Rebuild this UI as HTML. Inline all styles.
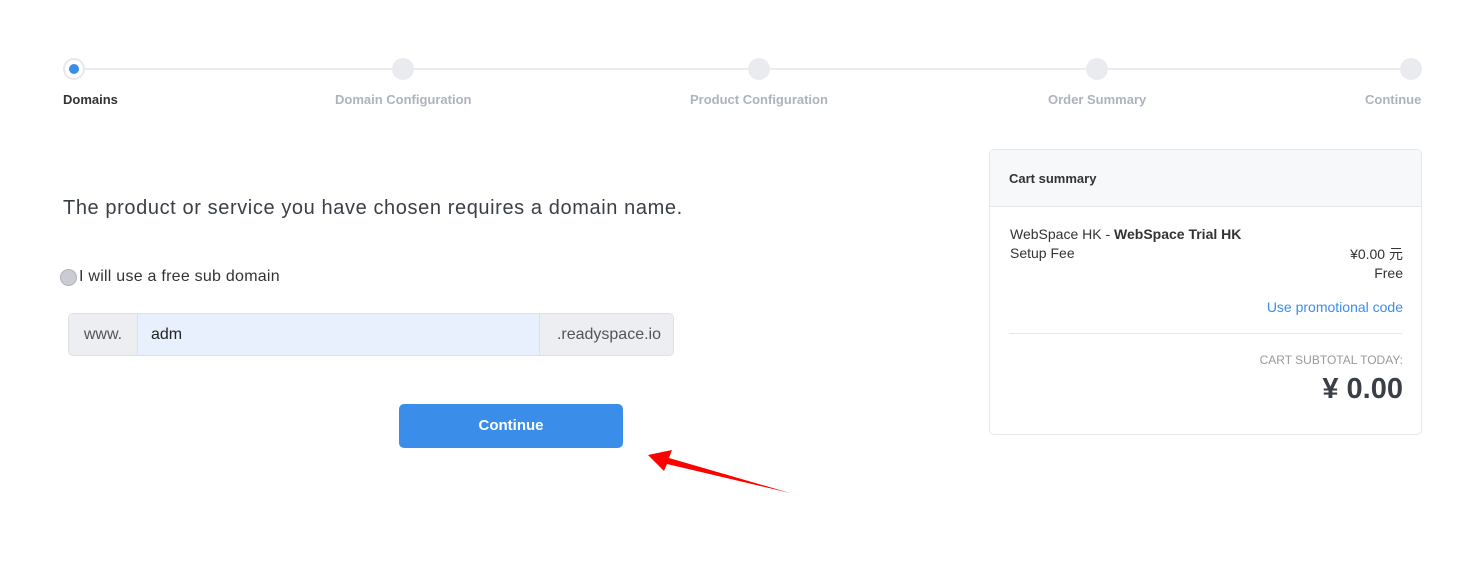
<!DOCTYPE html>
<html><head><meta charset="utf-8"><style>
body{margin:0;width:1464px;height:570px;background:#fff;font-family:"Liberation Sans","Noto Sans CJK SC",sans-serif;position:relative;overflow:hidden;color:#333}
.a{position:absolute}
.dot{position:absolute;width:22px;height:22px;border-radius:50%;background:#e9ebef;top:58px}
.lbl{position:absolute;top:92px;font-size:13px;font-weight:bold;color:#adb3bd;white-space:nowrap}
</style></head><body>
<div class="a" style="left:74px;top:68px;width:1336px;height:2px;background:#e9ebef"></div>
<div class="dot" style="left:63px;background:#fff;border:2px solid #e4e8ef;width:18px;height:18px"></div>
<div class="a" style="left:69px;top:64px;width:10px;height:10px;border-radius:50%;background:#3a8ee9"></div>
<div class="dot" style="left:392px"></div>
<div class="dot" style="left:748px"></div>
<div class="dot" style="left:1086px"></div>
<div class="dot" style="left:1400px"></div>
<div class="lbl" style="left:63px;color:#333">Domains</div>
<div class="lbl" style="left:335px">Domain Configuration</div>
<div class="lbl" style="left:690px">Product Configuration</div>
<div class="lbl" style="left:1048px">Order Summary</div>
<div class="lbl" style="left:1365px">Continue</div>

<div class="a" style="left:63px;top:197px;font-size:20px;letter-spacing:0.6px;color:#3a3f47">The product or service you have chosen requires a domain name.</div>
<div class="a" style="left:60px;top:269px;width:15px;height:15px;border-radius:50%;background:#c9cdd3;border:1px solid #aeb3ba"></div>
<div class="a" style="left:79px;top:268px;font-size:16px;letter-spacing:0.25px;color:#333">I will use a free sub domain</div>

<div class="a" style="left:68px;top:313px;width:604px;height:41px;border:1px solid #dde1e6;border-radius:5px;background:#eceef1;overflow:hidden">
<div class="a" style="left:0;top:0;width:68px;height:41px;line-height:41px;text-align:center;font-size:16px;color:#555">www.</div>
<div class="a" style="left:68px;top:0;width:403px;height:41px;background:#e8f0fd;border-left:1px solid #dde1e6;border-right:1px solid #dde1e6;line-height:41px;padding-left:13px;box-sizing:border-box;font-size:16px;color:#222">adm</div>
<div class="a" style="right:12px;top:0;height:41px;line-height:41px;font-size:16px;color:#555">.readyspace.io</div>
</div>

<div class="a" style="left:399px;top:404px;width:224px;height:44px;border-radius:5px;background:#3a8ee9;color:#fff;font-size:15px;font-weight:bold;text-align:center;line-height:44px">Continue</div>

<svg class="a" style="left:0;top:0" width="1464" height="570"><polygon points="648,455 672,450 669,458 790,493 667,464 664,471" fill="#f00"/></svg>

<div class="a" style="left:989px;top:149px;width:431px;height:284px;border:1px solid #e3e6ea;border-radius:5px;overflow:hidden">
<div class="a" style="left:0;top:0;width:431px;height:56px;background:#f7f8fa;border-bottom:1px solid #e3e6ea"></div>
<div class="a" style="left:19px;top:21px;font-size:13px;font-weight:bold;color:#333">Cart summary</div>
<div class="a" style="left:20px;top:76px;font-size:14px;color:#333">WebSpace HK - <b>WebSpace Trial HK</b></div>
<div class="a" style="left:20px;top:95px;font-size:14px;color:#333">Setup Fee</div>
<div class="a" style="right:18px;top:95px;font-size:14px;color:#333;text-align:right;line-height:19px">¥0.00 元<br>Free</div>
<div class="a" style="right:18px;top:149px;font-size:14px;color:#3a8ee9">Use promotional code</div>
<div class="a" style="left:19px;top:183px;width:393px;height:1px;background:#e3e6ea"></div>
<div class="a" style="right:18px;top:203px;font-size:12px;color:#999">CART SUBTOTAL TODAY:</div>
<div class="a" style="right:18px;top:223px;font-size:29px;font-weight:bold;color:#3a3f47">¥ 0.00</div>
</div>
</body></html>
